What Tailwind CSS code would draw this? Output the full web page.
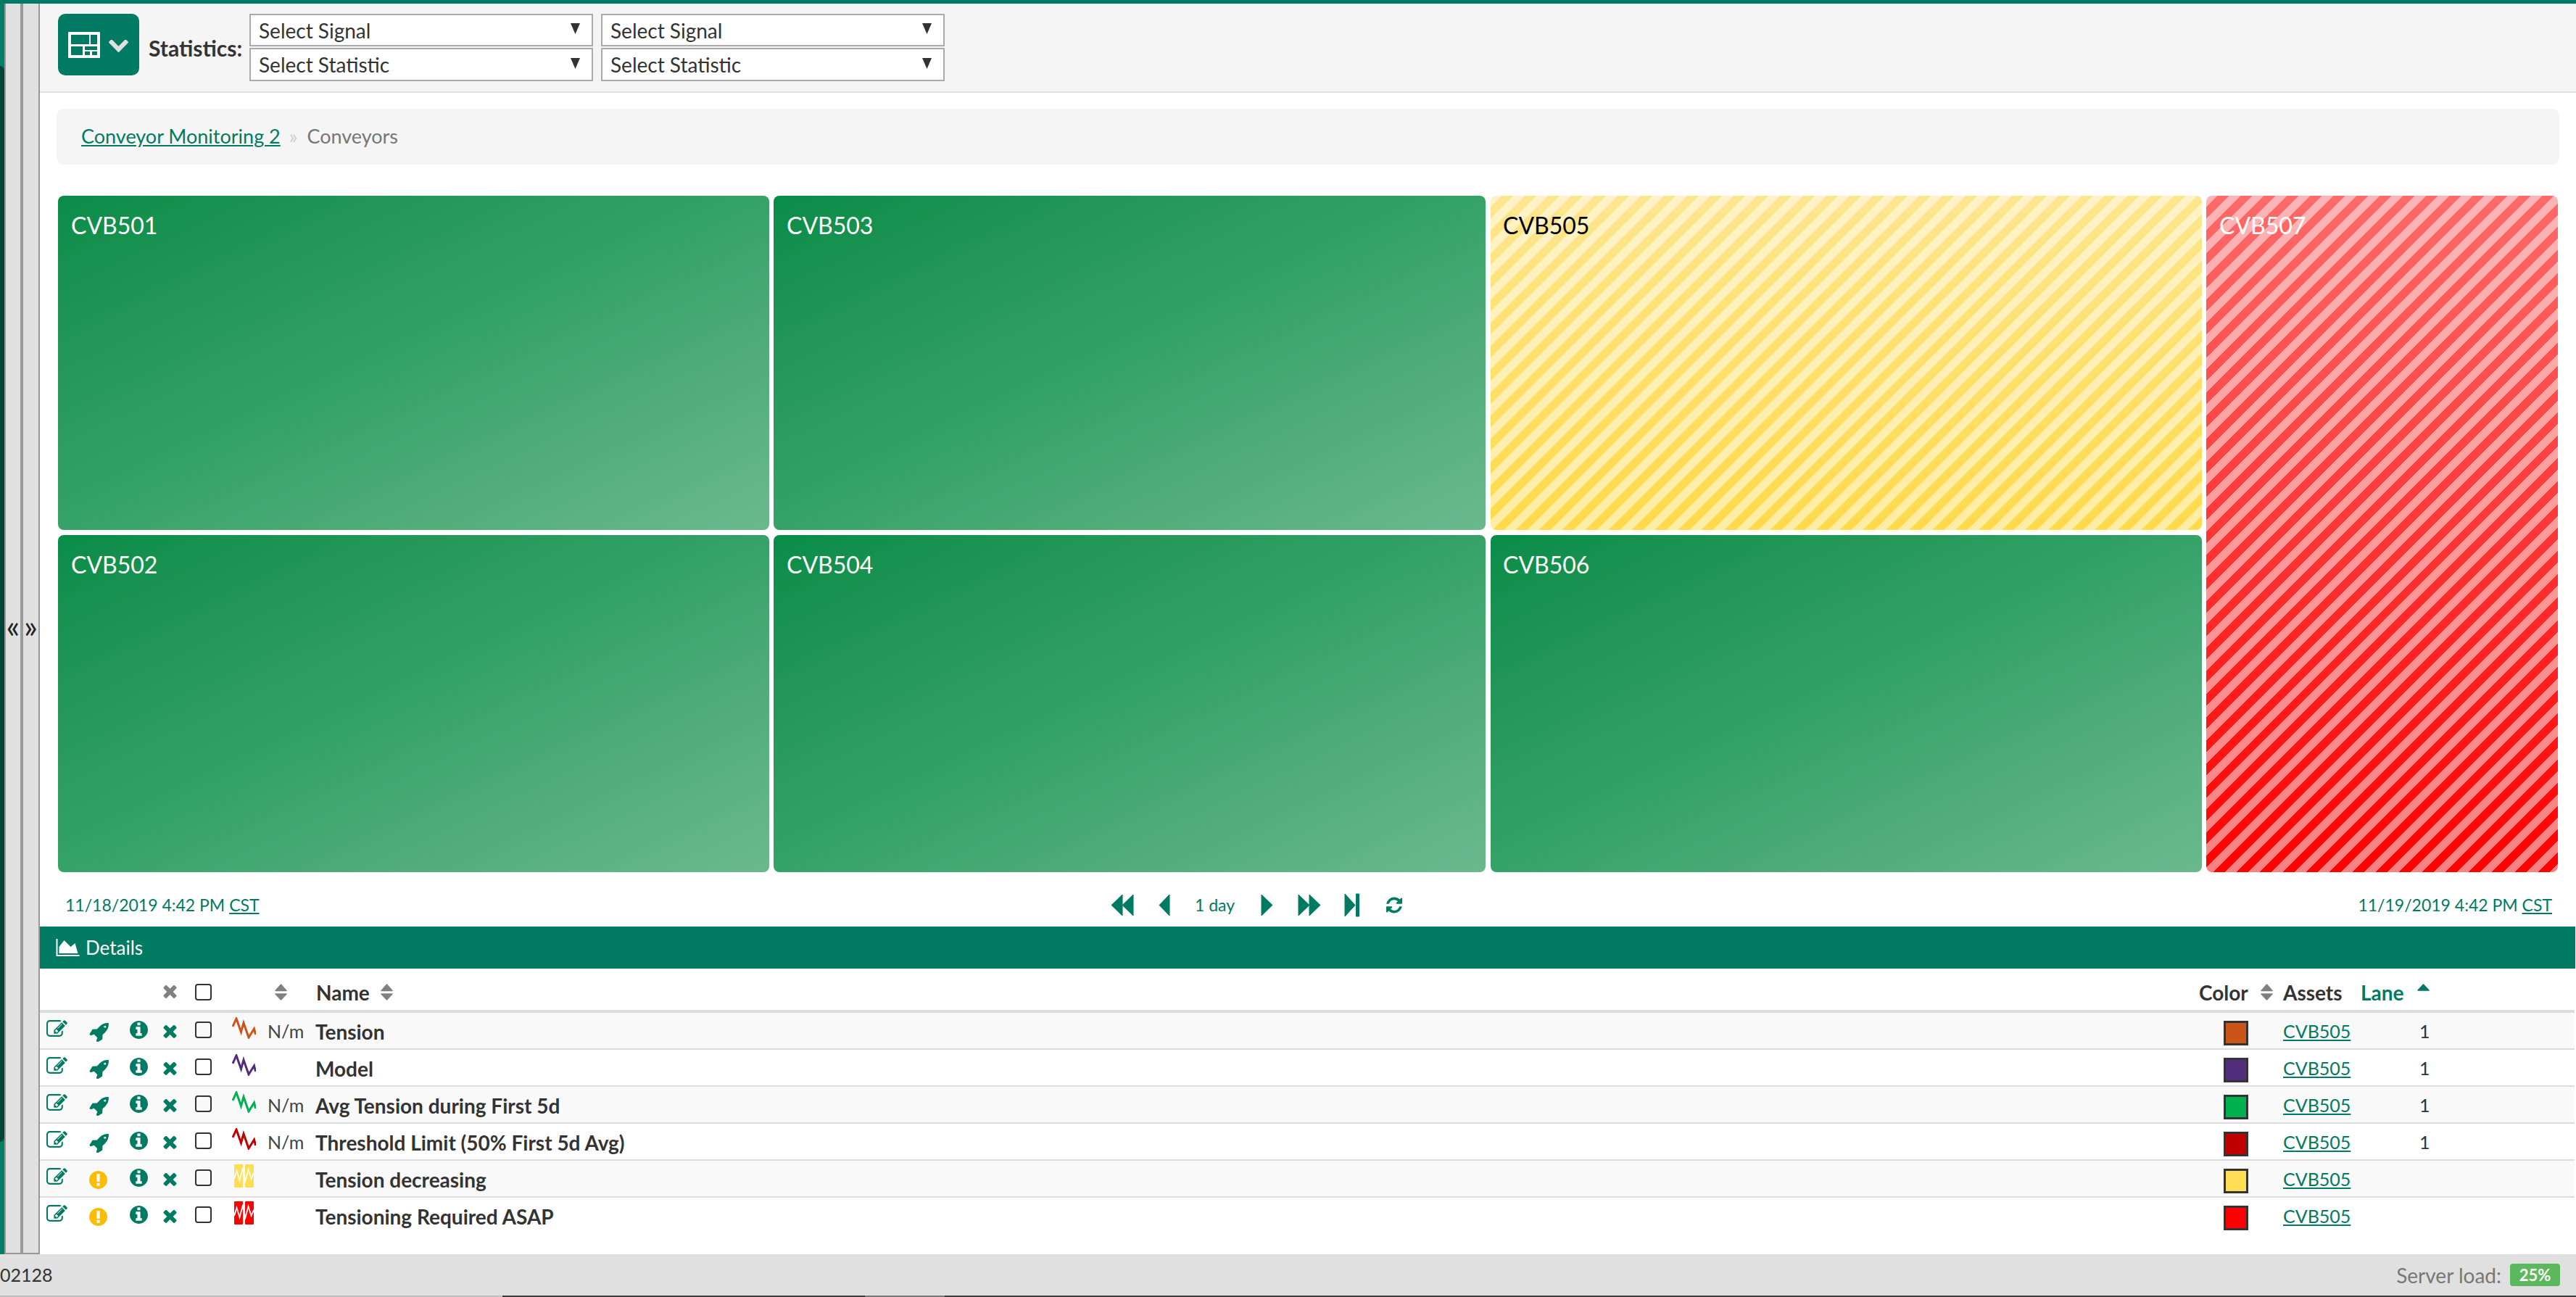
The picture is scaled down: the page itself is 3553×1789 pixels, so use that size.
<!DOCTYPE html>
<html lang="en">

<head>
	<meta charset="UTF-8">
	<title>Conveyors</title>
	<script src="https://cdn.jsdelivr.net/npm/@tailwindcss/browser@4"></script>
</head>

<body class="h-screen overflow-hidden flex flex-col bg-white text-[#333] font-['Lato','Noto_Sans',sans-serif] text-[28px]">

	<!-- shared icons -->
	<svg class="hidden">
		<symbol id="i-edit" viewBox="0 128 1792 1408"><path fill="currentColor" d="M888 1184l116-116-152-152-116 116v56h96v96h56zm440-720q-16-16-33 1l-350 350q-17 17-1 33t33-1l350-350q17-17 1-33zm80 594v190q0 119-84.500 203.500t-203.500 84.500h-832q-119 0-203.500-84.500t-84.500-203.500v-832q0-119 84.500-203.500t203.500-84.500h832q63 0 117 25 15 7 18 23 3 17-9 29l-49 49q-14 14-32 8-23-6-45-6h-832q-66 0-113 47t-47 113v832q0 66 47 113t113 47h832q66 0 113-47t47-113v-126q0-13 9-22l64-64q15-15 35-7t20 29zm-96-738l288 288-672 672h-288v-288zm444 132l-92 92-288-288 92-92q28-28 68-28t68 28l152 152q28 28 28 68t-28 68z"/></symbol>
		<symbol id="i-rocket" viewBox="64 64 1664 1664"><path fill="currentColor" d="M1504 448q0-40-28-68t-68-28-68 28-28 68 28 68 68 28 68-28 28-68zm224-288q0 249-75.500 430.500t-253.500 360.500q-81 80-195 176l-20 379q-2 16-16 26l-384 224q-7 4-16 4-12 0-23-9l-64-64q-13-14-8-32l85-276-281-281-276 85q-3 1-9 1-14 0-23-9l-64-64q-17-19-5-39l224-384q10-14 26-16l379-20q96-114 176-195 188-187 358-258t431-71q14 0 24 9.500t10 22.500z"/></symbol>
		<symbol id="i-info" viewBox="128 128 1536 1536"><path fill="currentColor" d="M1152 1376v-160q0-14-9-23t-23-9h-96v-512q0-14-9-23t-23-9h-320q-14 0-23 9t-9 23v160q0 14 9 23t23 9h96v320h-96q-14 0-23 9t-9 23v160q0 14 9 23t23 9h448q14 0 23-9t9-23zm-128-896v-160q0-14-9-23t-23-9h-192q-14 0-23 9t-9 23v160q0 14 9 23t23 9h192q14 0 23-9t9-23zm640 416q0 209-103 385.500t-279.500 279.500-385.500 103-385.500-103-279.500-279.500-103-385.500 103-385.500 279.500-279.500 385.500-103 385.500 103 279.500 279.500 103 385.500z"/></symbol>
		<symbol id="i-warn" viewBox="128 128 1536 1536"><path fill="currentColor" d="M896 128q209 0 385.500 103t279.500 279.500 103 385.500-103 385.500-279.500 279.500-385.500 103-385.500-103-279.500-279.500-103-385.500 103-385.500 279.500-279.500 385.500-103zm128 1247v-190q0-14-9-23.500t-22-9.500h-192q-13 0-23 10t-10 23v190q0 13 10 23t23 10h192q13 0 22-9.500t9-23.500zm-2-344l18-621q0-12-10-18-10-8-24-8h-220q-14 0-24 8-10 6-10 18l17 621q0 10 10 17.500t24 7.500h185q14 0 23.500-7.500t10.500-17.500z"/></symbol>
		<symbol id="i-x" viewBox="302 238 1188 1316"><path fill="currentColor" d="M1490 1322q0 40-28 68l-136 136q-28 28-68 28t-68-28l-294-294-294 294q-28 28-68 28t-68-28l-136-136q-28-28-28-68t28-68l294-294-294-294q-28-28-28-68t28-68l136-136q28-28 68-28t68 28l294 294 294-294q28-28 68-28t68 28l136 136q28 28 28 68t-28 68l-294 294 294 294q28 28 28 68z"/></symbol>
		<symbol id="i-sort" viewBox="0 0 17 23"><path fill="currentColor" stroke="currentColor" stroke-width="1.5" stroke-linejoin="round" d="M8.500 1L16 9.500H1zM1 14h15l-7.500 8z"/></symbol>
		<symbol id="i-spark" viewBox="0 0 33 30"><path fill="none" stroke="currentColor" stroke-width="3" stroke-linejoin="miter" d="M1 13L6 2l6.500 18.500L16 8l7 20 7.500-12 2 8"/></symbol>
		<symbol id="i-cond" viewBox="0 0 33 32"><rect x="3" y="0" width="12" height="32" rx="1" fill="currentColor"/><rect x="18" y="0" width="12" height="32" rx="1" fill="currentColor"/><path fill="none" stroke="#fff" stroke-width="1.800" d="M3 20l3.500-11 4 13 4-15 4 15 4-15 4 13 3.500-8"/></symbol>
	</svg>

	<div class="h-[5px] shrink-0 bg-[#007a62]"></div>

	<div class="flex-1 min-h-0 flex">
		<!-- sliver of the page behind the panel -->
		<div class="w-[6px] shrink-0 flex flex-col bg-[#007f66]">
			<div class="h-[86px]"></div>
			<div class="flex-1 bg-[#004438] rounded-r-[6px]"></div>
			<div class="h-[155px]"></div>
		</div>

		<!-- collapse handles -->
		<div class="w-[49px] shrink-0 flex bg-[#e0e0e0] border-x-2 border-b-2 border-[#999] text-[#222] text-[44px] leading-none">
			<div class="w-[20px] flex items-center justify-center pb-[8px]">«</div>
			<div class="w-[4px] bg-[#999]"></div>
			<div class="flex-1 flex items-center justify-center pb-[8px]">»</div>
		</div>

		<div class="flex-1 min-w-0 flex flex-col">
			<!-- toolbar -->
			<div class="h-[123px] shrink-0 bg-[#f5f5f5] border-b-2 border-[#e0e0e0] pl-[25px] pt-[14px] flex items-start">
				<button class="w-[112px] h-[85px] rounded-[10px] bg-[#007a62] flex items-center pl-[14px] gap-[12px]">
					<svg class="w-[44px] h-[36px]" viewBox="0 0 44 36"><path fill="#fff" fill-rule="evenodd" d="M1 0h42a1 1 0 0 1 1 1v34a1 1 0 0 1-1 1H1a1 1 0 0 1-1-1V1a1 1 0 0 1 1-1zM4 4v13h25V4zM31 4v13h9V4zM4 20v12h16V20zM23 20v5h17v-5zM23 27v5h7v-5zM33 27v5h7v-5z"/></svg>
					<svg class="mt-[4px] w-[27px] h-[17px] text-[#e0e0e0]" viewBox="90 570 1612 1000" preserveAspectRatio="none"><path fill="currentColor" d="M1683 808l-742 741q-19 19-45 19t-45-19l-742-741q-19-19-19-45.500t19-45.500l166-165q19-19 45-19t45 19l531 531 531-531q19-19 45-19t45 19l166 165q19 19 19 45.500t-19 45.500z"/></svg>
				</button>
				<div class="ml-[13px] w-[139px] h-[85px] pt-[9px] flex items-center font-bold text-[30px]">Statistics:</div>
				<div class="grid grid-cols-[474px_474px] content-start gap-x-[11px] gap-y-[2px]">
					<div class="h-[45px] bg-white border-2 border-[#aaa] flex items-center justify-between pl-[11px] pr-[16px]"><span>Select Signal</span><svg class="w-[13px] h-[15px] mb-[4px]" viewBox="0 0 13 15"><path fill="#333" d="M0 0h13L6.500 15z"/></svg></div>
					<div class="h-[45px] bg-white border-2 border-[#aaa] flex items-center justify-between pl-[11px] pr-[16px]"><span>Select Signal</span><svg class="w-[13px] h-[15px] mb-[4px]" viewBox="0 0 13 15"><path fill="#333" d="M0 0h13L6.500 15z"/></svg></div>
					<div class="h-[46px] bg-white border-2 border-[#aaa] flex items-center justify-between pl-[11px] pr-[16px]"><span>Select Statistic</span><svg class="w-[13px] h-[15px] mb-[4px]" viewBox="0 0 13 15"><path fill="#333" d="M0 0h13L6.500 15z"/></svg></div>
					<div class="h-[46px] bg-white border-2 border-[#aaa] flex items-center justify-between pl-[11px] pr-[16px]"><span>Select Statistic</span><svg class="w-[13px] h-[15px] mb-[4px]" viewBox="0 0 13 15"><path fill="#333" d="M0 0h13L6.500 15z"/></svg></div>
				</div>
			</div>

			<!-- breadcrumb -->
			<div class="h-[77px] shrink-0 mt-[22px] ml-[23px] mr-[23px] rounded-[10px] bg-[#f5f5f5] flex items-center pl-[34px] text-[27px]">
				<a class="text-[#007a62] underline">Conveyor Monitoring 2</a>
				<span class="ml-[12px] text-[#ccc]">»</span>
				<span class="ml-[13px] text-[#777]">Conveyors</span>
			</div>

			<!-- treemap -->
			<div class="h-[933px] shrink-0 mt-[43px] ml-[25px] mr-[25px] grid grid-cols-[981px_982px_982px_1fr] grid-rows-[461px_465px] gap-x-[6px] gap-y-[7px] text-[32px] text-white">
				<div class="rounded-[8px] bg-linear-to-br from-[#078c47] via-[#35a268] to-[#6ab98e] pl-[18px] pt-[17px]">CVB501</div>
				<div class="rounded-[8px] bg-linear-to-br from-[#078c47] via-[#35a268] to-[#6ab98e] pl-[18px] pt-[17px]">CVB503</div>
				<div class="ml-[1px] rounded-[8px] bg-[repeating-linear-gradient(135deg,rgba(255,255,255,0.5)_0,rgba(255,255,255,0.5)_11.3px,transparent_11.3px,transparent_22.6px),linear-gradient(to_bottom,#ffe68e,#ffda4a)] pl-[17px] pt-[17px] text-black">CVB505</div>
				<div class="row-span-2 rounded-[8px] bg-[repeating-linear-gradient(135deg,rgba(255,255,255,0.5)_0,rgba(255,255,255,0.5)_11.3px,transparent_11.3px,transparent_22.6px),linear-gradient(to_bottom,#ff6a6a,#ff0000)] pl-[18px] pt-[17px]">CVB507</div>
				<div class="rounded-[8px] bg-linear-to-br from-[#078c47] via-[#35a268] to-[#6ab98e] pl-[18px] pt-[17px]">CVB502</div>
				<div class="rounded-[8px] bg-linear-to-br from-[#078c47] via-[#35a268] to-[#6ab98e] pl-[18px] pt-[17px]">CVB504</div>
				<div class="ml-[1px] rounded-[8px] bg-linear-to-br from-[#078c47] via-[#35a268] to-[#6ab98e] pl-[17px] pt-[17px]">CVB506</div>
			</div>

			<!-- time range -->
			<div class="h-[75px] shrink-0 pt-[16px] pl-[35px] pr-[33px] grid grid-cols-[1442px_auto_1fr] items-center text-[#007a62] text-[23px]">
				<div>11/18/2019 4:42 PM <a class="underline">CST</a></div>
				<div class="flex items-center">
					<svg class="w-[32px] h-[31px]" viewBox="0 0 32 31"><path fill="currentColor" stroke="currentColor" stroke-linejoin="round" d="M16 1L1 15.500 16 30zM31 1L16 15.500 31 30z"/></svg>
					<svg class="ml-[34px] w-[16px] h-[31px]" viewBox="0 0 16 31"><path fill="currentColor" stroke="currentColor" stroke-linejoin="round" d="M15 1L1 15.500 15 30z"/></svg>
					<span class="ml-[34px] w-[91px]">1 day</span>
					<svg class="w-[17px] h-[31px]" viewBox="0 0 17 31"><path fill="currentColor" stroke="currentColor" stroke-linejoin="round" d="M1 1l15 14.500L1 30z"/></svg>
					<svg class="ml-[34px] w-[32px] h-[31px]" viewBox="0 0 32 31"><path fill="currentColor" stroke="currentColor" stroke-linejoin="round" d="M1 1l15 14.500L1 30zM16 1l15 14.500L16 30z"/></svg>
					<svg class="ml-[32px] w-[21px] h-[33px]" viewBox="0 0 21 33"><path fill="currentColor" stroke="currentColor" stroke-linejoin="round" d="M1 1l14 15.500L1 32zM16.500 1h4v31h-4z"/></svg>
					<svg class="ml-[37px] w-[22px] h-[23px]" viewBox="128 128 1536 1536"><path fill="currentColor" d="M1639 1056q0 5-1 7-64 268-268 434.500t-478 166.500q-146 0-282.500-55t-243.500-157l-129 129q-19 19-45 19t-45-19-19-45v-448q0-26 19-45t45-19h448q26 0 45 19t19 45-19 45l-137 137q71 66 161 102t187 36q134 0 250-65t186-179q11-17 53-117 8-23 30-23h192q13 0 22.500 9.500t9.500 22.500zm25-800v448q0 26-19 45t-45 19h-448q-26 0-45-19t-19-45 19-45l138-138q-148-137-349-137-134 0-250 65t-186 179q-11 17-53 117-8 23-30 23h-199q-13 0-22.500-9.500t-9.500-22.500v-7q65-268 270-434.500t480-166.500q146 0 284 55.500t245 156.500l130-129q19-19 45-19t45 19 19 45z"/></svg>
				</div>
				<div class="text-right">11/19/2019 4:42 PM <a class="underline">CST</a></div>
			</div>

			<!-- details panel -->
			<div class="h-[58px] shrink-0 mr-[1px] bg-[#007a62] text-white flex items-center pl-[22px] gap-[8px] text-[26px]">
				<svg class="w-[33px] h-[24px]" viewBox="0 128 2048 1536"><path fill="currentColor" d="M2048 1536v128h-2048v-1536h128v1408h1920zm-384-1024l256 896h-1664v-576l448-576 576 576z"/></svg>
				<span>Details</span>
			</div>

			<div class="mr-[2px]">
				<!-- header -->
				<div class="h-[61px] border-b-4 border-[#ddd] grid grid-cols-[63px_52px_50px_42px_50px_52px_66px_1fr_115px_110px_301px] font-bold">
					<div></div><div></div><div></div>
					<div class="pl-[5px] pt-[21px]"><svg class="w-[19px] h-[20px] text-[#808080]"><use href="#i-x"/></svg></div>
					<div class="pl-[7px] pt-[21px]"><input type="checkbox" class="block appearance-none w-[23px] h-[23px] rounded-[4px] border-2 border-[#333]"></div>
					<div></div>
					<div class="pl-[15px] pt-[21px]"><svg class="w-[17px] h-[23px] text-[#808080]"><use href="#i-sort"/></svg></div>
					<div class="pl-[6px] pt-[12px] flex"><span class="w-[89px]">Name</span><svg class="mt-[9px] w-[17px] h-[23px] text-[#808080]"><use href="#i-sort"/></svg></div>
					<div class="pl-[8px] pt-[12px] flex"><span class="w-[85px]">Color</span><svg class="mt-[9px] w-[17px] h-[23px] text-[#808080]"><use href="#i-sort"/></svg></div>
					<div class="pl-[9px] pt-[12px]">Assets</div>
					<div class="pl-[6px] pt-[12px] flex text-[#007a62]"><span class="w-[78px]">Lane</span><svg class="mt-[9px] w-[17px] h-[10px]" viewBox="0 0 17 10"><path fill="currentColor" stroke="currentColor" stroke-width="1.500" stroke-linejoin="round" d="M8.500 1L16 9H1z"/></svg></div>
				</div>

				<!-- rows -->
				<div class="h-[51px] bg-[#f9f9f9] border-b-2 border-[#ddd] grid grid-cols-[63px_52px_50px_42px_50px_52px_66px_1fr_115px_110px_301px] items-start text-[#007a62] text-[25px]">
					<div class="pl-[9px] pt-[10px]"><svg class="w-[29px] h-[23px]"><use href="#i-edit"/></svg></div>
					<div class="pl-[5px] pt-[13px]"><svg class="w-[27px] h-[27px]"><use href="#i-rocket"/></svg></div>
					<div class="pl-[9px] pt-[11px]"><svg class="w-[25px] h-[25px]"><use href="#i-info"/></svg></div>
					<div class="pl-[5px] pt-[15px]"><svg class="w-[19px] h-[20px]"><use href="#i-x"/></svg></div>
					<div class="pl-[7px] pt-[12px]"><input type="checkbox" class="block appearance-none w-[23px] h-[23px] rounded-[4px] border-2 border-[#333]"></div>
					<div class="pl-[8px] pt-[6px]"><svg class="w-[33px] h-[30px] text-[#cb5518]"><use href="#i-spark"/></svg></div>
					<div class="pl-[5px] pt-[7px] text-[#444]">N/m</div>
					<div class="pl-[5px] pt-[5px] font-bold text-[#333] text-[28px]">Tension</div>
					<div class="pl-[42px] pt-[11px]"><div class="w-[34px] h-[34px] border-[3px] border-[#333] bg-[#cb5518]"></div></div>
					<div class="pl-[9px] pt-[7px]"><a class="underline">CVB505</a></div>
					<div class="pl-[87px] pt-[7px] text-[#333]">1</div>
				</div>
				<div class="h-[51px] border-b-2 border-[#ddd] grid grid-cols-[63px_52px_50px_42px_50px_52px_66px_1fr_115px_110px_301px] items-start text-[#007a62] text-[25px]">
					<div class="pl-[9px] pt-[10px]"><svg class="w-[29px] h-[23px]"><use href="#i-edit"/></svg></div>
					<div class="pl-[5px] pt-[13px]"><svg class="w-[27px] h-[27px]"><use href="#i-rocket"/></svg></div>
					<div class="pl-[9px] pt-[11px]"><svg class="w-[25px] h-[25px]"><use href="#i-info"/></svg></div>
					<div class="pl-[5px] pt-[15px]"><svg class="w-[19px] h-[20px]"><use href="#i-x"/></svg></div>
					<div class="pl-[7px] pt-[12px]"><input type="checkbox" class="block appearance-none w-[23px] h-[23px] rounded-[4px] border-2 border-[#333]"></div>
					<div class="pl-[8px] pt-[6px]"><svg class="w-[33px] h-[30px] text-[#512d7b]"><use href="#i-spark"/></svg></div>
					<div></div>
					<div class="pl-[5px] pt-[5px] font-bold text-[#333] text-[28px]">Model</div>
					<div class="pl-[42px] pt-[11px]"><div class="w-[34px] h-[34px] border-[3px] border-[#333] bg-[#512d7b]"></div></div>
					<div class="pl-[9px] pt-[7px]"><a class="underline">CVB505</a></div>
					<div class="pl-[87px] pt-[7px] text-[#333]">1</div>
				</div>
				<div class="h-[51px] bg-[#f9f9f9] border-b-2 border-[#ddd] grid grid-cols-[63px_52px_50px_42px_50px_52px_66px_1fr_115px_110px_301px] items-start text-[#007a62] text-[25px]">
					<div class="pl-[9px] pt-[10px]"><svg class="w-[29px] h-[23px]"><use href="#i-edit"/></svg></div>
					<div class="pl-[5px] pt-[13px]"><svg class="w-[27px] h-[27px]"><use href="#i-rocket"/></svg></div>
					<div class="pl-[9px] pt-[11px]"><svg class="w-[25px] h-[25px]"><use href="#i-info"/></svg></div>
					<div class="pl-[5px] pt-[15px]"><svg class="w-[19px] h-[20px]"><use href="#i-x"/></svg></div>
					<div class="pl-[7px] pt-[12px]"><input type="checkbox" class="block appearance-none w-[23px] h-[23px] rounded-[4px] border-2 border-[#333]"></div>
					<div class="pl-[8px] pt-[6px]"><svg class="w-[33px] h-[30px] text-[#00b04f]"><use href="#i-spark"/></svg></div>
					<div class="pl-[5px] pt-[7px] text-[#444]">N/m</div>
					<div class="pl-[5px] pt-[5px] font-bold text-[#333] text-[28px]">Avg Tension during First 5d</div>
					<div class="pl-[42px] pt-[11px]"><div class="w-[34px] h-[34px] border-[3px] border-[#333] bg-[#00b04f]"></div></div>
					<div class="pl-[9px] pt-[7px]"><a class="underline">CVB505</a></div>
					<div class="pl-[87px] pt-[7px] text-[#333]">1</div>
				</div>
				<div class="h-[51px] border-b-2 border-[#ddd] grid grid-cols-[63px_52px_50px_42px_50px_52px_66px_1fr_115px_110px_301px] items-start text-[#007a62] text-[25px]">
					<div class="pl-[9px] pt-[10px]"><svg class="w-[29px] h-[23px]"><use href="#i-edit"/></svg></div>
					<div class="pl-[5px] pt-[13px]"><svg class="w-[27px] h-[27px]"><use href="#i-rocket"/></svg></div>
					<div class="pl-[9px] pt-[11px]"><svg class="w-[25px] h-[25px]"><use href="#i-info"/></svg></div>
					<div class="pl-[5px] pt-[15px]"><svg class="w-[19px] h-[20px]"><use href="#i-x"/></svg></div>
					<div class="pl-[7px] pt-[12px]"><input type="checkbox" class="block appearance-none w-[23px] h-[23px] rounded-[4px] border-2 border-[#333]"></div>
					<div class="pl-[8px] pt-[6px]"><svg class="w-[33px] h-[30px] text-[#c00000]"><use href="#i-spark"/></svg></div>
					<div class="pl-[5px] pt-[7px] text-[#444]">N/m</div>
					<div class="pl-[5px] pt-[5px] font-bold text-[#333] text-[28px]">Threshold Limit (50% First 5d Avg)</div>
					<div class="pl-[42px] pt-[11px]"><div class="w-[34px] h-[34px] border-[3px] border-[#333] bg-[#c00000]"></div></div>
					<div class="pl-[9px] pt-[7px]"><a class="underline">CVB505</a></div>
					<div class="pl-[87px] pt-[7px] text-[#333]">1</div>
				</div>
				<div class="h-[51px] bg-[#f9f9f9] border-b-2 border-[#ddd] grid grid-cols-[63px_52px_50px_42px_50px_52px_66px_1fr_115px_110px_301px] items-start text-[#007a62] text-[25px]">
					<div class="pl-[9px] pt-[10px]"><svg class="w-[29px] h-[23px]"><use href="#i-edit"/></svg></div>
					<div class="pl-[5px] pt-[14px]"><svg class="w-[25px] h-[25px] text-[#fbbc05]"><use href="#i-warn"/></svg></div>
					<div class="pl-[9px] pt-[11px]"><svg class="w-[25px] h-[25px]"><use href="#i-info"/></svg></div>
					<div class="pl-[5px] pt-[15px]"><svg class="w-[19px] h-[20px]"><use href="#i-x"/></svg></div>
					<div class="pl-[7px] pt-[12px]"><input type="checkbox" class="block appearance-none w-[23px] h-[23px] rounded-[4px] border-2 border-[#333]"></div>
					<div class="pl-[8px] pt-[5px]"><svg class="w-[33px] h-[32px] text-[#ffdd55]"><use href="#i-cond"/></svg></div>
					<div></div>
					<div class="pl-[5px] pt-[5px] font-bold text-[#333] text-[28px]">Tension decreasing</div>
					<div class="pl-[42px] pt-[11px]"><div class="w-[34px] h-[34px] border-[3px] border-[#333] bg-[#ffdd55]"></div></div>
					<div class="pl-[9px] pt-[7px]"><a class="underline">CVB505</a></div>
					<div></div>
				</div>
				<div class="h-[51px] grid grid-cols-[63px_52px_50px_42px_50px_52px_66px_1fr_115px_110px_301px] items-start text-[#007a62] text-[25px]">
					<div class="pl-[9px] pt-[10px]"><svg class="w-[29px] h-[23px]"><use href="#i-edit"/></svg></div>
					<div class="pl-[5px] pt-[14px]"><svg class="w-[25px] h-[25px] text-[#fbbc05]"><use href="#i-warn"/></svg></div>
					<div class="pl-[9px] pt-[11px]"><svg class="w-[25px] h-[25px]"><use href="#i-info"/></svg></div>
					<div class="pl-[5px] pt-[15px]"><svg class="w-[19px] h-[20px]"><use href="#i-x"/></svg></div>
					<div class="pl-[7px] pt-[12px]"><input type="checkbox" class="block appearance-none w-[23px] h-[23px] rounded-[4px] border-2 border-[#333]"></div>
					<div class="pl-[8px] pt-[5px]"><svg class="w-[33px] h-[32px] text-[#ff0000]"><use href="#i-cond"/></svg></div>
					<div></div>
					<div class="pl-[5px] pt-[5px] font-bold text-[#333] text-[28px]">Tensioning Required ASAP</div>
					<div class="pl-[42px] pt-[11px]"><div class="w-[34px] h-[34px] border-[3px] border-[#333] bg-[#ff0000]"></div></div>
					<div class="pl-[9px] pt-[7px]"><a class="underline">CVB505</a></div>
					<div></div>
				</div>
			</div>
		</div>
	</div>

	<!-- status bar -->
	<div class="h-[57px] shrink-0 bg-[#e0e0e0] flex items-center justify-between pr-[22px]">
		<span class="text-[25px]">02128</span>
		<div class="flex items-center gap-[12px]">
			<span class="text-[#777]">Server load:</span>
			<span class="w-[69px] h-[31px] rounded-[4px] bg-[#5cb85c] text-white font-bold text-[22px] flex items-center justify-center">25%</span>
		</div>
	</div>
	<div class="h-[2px] shrink-0 flex">
		<div class="w-[693px] bg-[#bdbdbd]"></div>
		<div class="w-[500px] bg-[#3a3a3a]"></div>
		<div class="w-[110px] bg-[#777]"></div>
		<div class="flex-1 bg-[#3a3a3a]"></div>
	</div>

</body>

</html>
